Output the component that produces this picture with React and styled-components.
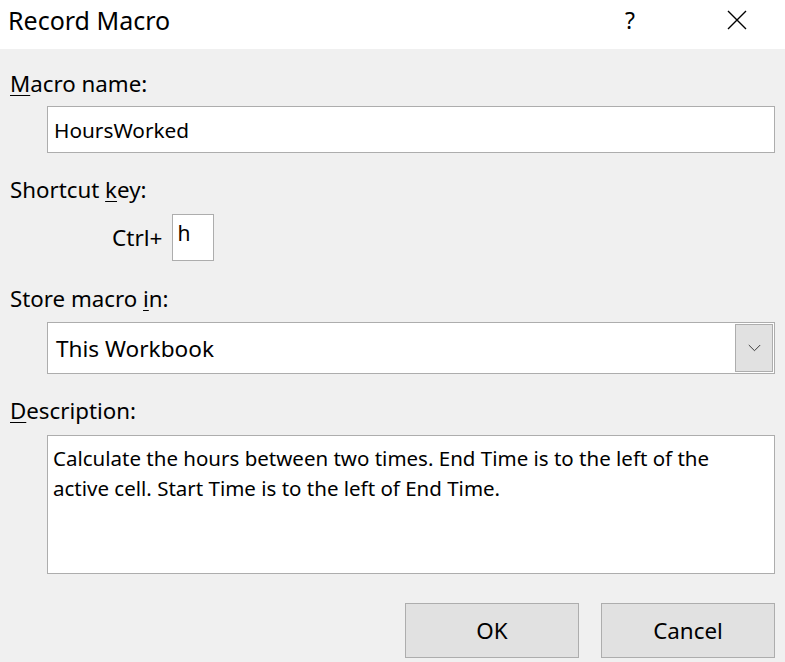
import React from "react";
import styled, { createGlobalStyle } from "styled-components";

const Global = createGlobalStyle`
  html, body { margin: 0; padding: 0; background: #f0f0f0; }
  body { font-family: "Segoe UI", "Noto Sans", "Open Sans", sans-serif; color: #000; }
  * { box-sizing: border-box; }
`;

const Dialog = styled.div`
  width: 785px;
  height: 662px;
  background: #f0f0f0;
  display: flex;
  flex-direction: column;
  overflow: hidden;
`;

const TitleBar = styled.div`
  height: 49px;
  background: #ffffff;
  display: flex;
  align-items: center;
  padding: 0 25px 0 8px;
  flex-shrink: 0;
`;

const Title = styled.div`
  font-size: 25px;
  flex: 1;
  margin-top: -9px;
`;

const TitleButton = styled.div`
  width: ${(p) => p.$w}px;
  margin-left: ${(p) => p.$ml || 0}px;
  height: 40px;
  display: flex;
  align-items: center;
  justify-content: center;
  margin-top: -9px;
  font-size: 23px;
`;

const Body = styled.div`
  display: flex;
  flex-direction: column;
  padding: 21px 10px 0 10px;
`;

const Label = styled.div`
  height: 28px;
  line-height: 28px;
  font-size: 22.3px;
  margin-top: ${(p) => p.$mt || 0}px;
  u { text-decoration-thickness: 1px; text-underline-offset: 3px; }
`;

const Indented = styled.div`
  margin-left: 37px;
  margin-top: ${(p) => p.$mt || 0}px;
`;

const TextBox = styled.div`
  height: ${(p) => p.$h}px;
  background: #fff;
  border: 1px solid #adadad;
  font-size: 20.8px;
  display: flex;
  align-items: center;
  padding-left: 6px;
`;

const ShortcutRow = styled.div`
  display: flex;
  align-items: center;
  margin-left: 102px;
  margin-top: 10px;
  height: 47px;
  gap: 9px;
  font-size: 22.6px;
`;

const KeyBox = styled.div`
  width: 42px;
  height: 47px;
  background: #fff;
  border: 1px solid #adadad;
  font-size: 21px;
  line-height: 1;
  padding: 8px 0 0 5px;
`;

const Select = styled.div`
  height: 52px;
  background: #fff;
  border: 1px solid #adadad;
  display: flex;
  align-items: center;
  padding: 1px;
  font-size: 22.6px;
`;

const SelectValue = styled.div`
  flex: 1;
  padding-left: 7px;
`;

const DropButton = styled.div`
  width: 38px;
  height: 100%;
  background: #e1e1e1;
  border: 1px solid #adadad;
  display: flex;
  align-items: center;
  justify-content: center;
`;

const TextArea = styled.div`
  height: 139px;
  background: #fff;
  border: 1px solid #adadad;
  font-size: 20.5px;
  line-height: 30px;
  padding: 7px 50px 0 5px;
`;

const ButtonRow = styled.div`
  display: flex;
  justify-content: flex-end;
  gap: 22px;
  margin-top: 29px;
`;

const Button = styled.div`
  width: 174px;
  height: 55px;
  background: #e1e1e1;
  border: 1px solid #adadad;
  display: flex;
  align-items: center;
  justify-content: center;
  font-size: 22.4px;
`;

export default function App() {
  return (
    <>
      <Global />
      <Dialog>
        <TitleBar>
          <Title>Record Macro</Title>
          <TitleButton $w={40}>?</TitleButton>
          <TitleButton $w={46} $ml={64}>
            <svg width="20" height="20" viewBox="0 0 20 20">
              <path d="M1 1 L19 19 M19 1 L1 19" stroke="#000" strokeWidth="1.4" fill="none" />
            </svg>
          </TitleButton>
        </TitleBar>
        <Body>
          <Label><u>M</u>acro name:</Label>
          <Indented $mt={8}>
            <TextBox $h={47}>HoursWorked</TextBox>
          </Indented>
          <Label $mt={23}>Shortcut <u>k</u>ey:</Label>
          <ShortcutRow>
            <span>Ctrl+</span>
            <KeyBox>h</KeyBox>
          </ShortcutRow>
          <Label $mt={24}>Store macro <u>i</u>n:</Label>
          <Indented $mt={9}>
            <Select>
              <SelectValue>This Workbook</SelectValue>
              <DropButton>
                <svg width="13" height="8" viewBox="0 0 13 8">
                  <path d="M0.8 1 L6.5 6.7 L12.2 1" stroke="#3c3c3c" strokeWidth="1" fill="none" />
                </svg>
              </DropButton>
            </Select>
          </Indented>
          <Label $mt={23}><u>D</u>escription:</Label>
          <Indented $mt={10}>
            <TextArea>
              Calculate the hours between two times. End Time is to the left of the active cell. Start Time is to the left of End Time.
            </TextArea>
          </Indented>
          <ButtonRow>
            <Button>OK</Button>
            <Button>Cancel</Button>
          </ButtonRow>
        </Body>
      </Dialog>
    </>
  );
}
